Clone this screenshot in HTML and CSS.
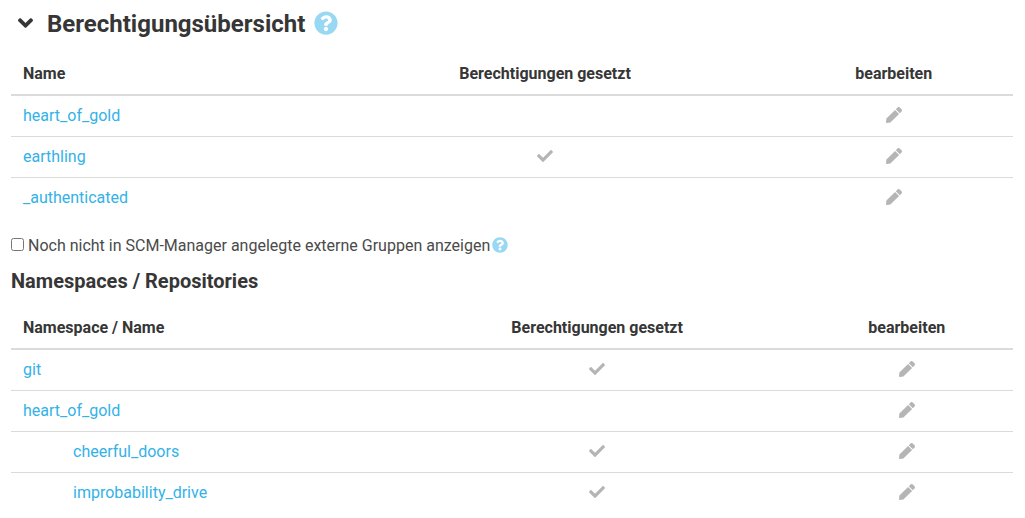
FILE: index.html
```html
<!DOCTYPE html>
<html lang="de">
<head>
<meta charset="utf-8">
<title>Berechtigungsübersicht</title>
<link rel="stylesheet" href="styles.css">
</head>
<body>
<svg class="sprite" aria-hidden="true">
  <symbol id="check" viewBox="0 0 512 512"><path d="M173.898 439.404l-166.4-166.4c-9.997-9.997-9.997-26.206 0-36.204l36.203-36.204c9.997-9.998 26.207-9.998 36.204 0L192 312.69 432.095 72.596c9.997-9.997 26.207-9.997 36.204 0l36.203 36.204c9.997 9.997 9.997 26.206 0 36.204l-294.4 294.401c-9.998 9.997-26.207 9.997-36.204-.001z"/></symbol>
  <symbol id="pen" viewBox="0 0 512 512"><path d="M290.74 93.24l128.02 128.02-277.99 277.99-114.14 12.6C11.35 513.54-1.56 500.62.14 485.34l12.7-114.22 277.9-277.88zm207.2-19.06l-60.11-60.11c-18.75-18.75-49.16-18.75-67.91 0l-56.55 56.55 128.02 128.02 56.55-56.55c18.75-18.76 18.75-49.16 0-67.91z"/></symbol>
  <symbol id="help" viewBox="0 0 512 512"><path d="M504 256c0 136.997-111.043 248-248 248S8 392.997 8 256C8 119.083 119.043 8 256 8s248 111.083 248 248zM262.655 90c-54.497 0-89.255 22.957-116.549 63.758-3.536 5.286-2.353 12.415 2.715 16.258l34.699 26.31c5.205 3.947 12.621 3.008 16.665-2.122 17.864-22.658 30.113-35.797 57.303-35.797 20.429 0 45.698 13.148 45.698 32.958 0 14.976-12.363 22.667-32.534 33.976C247.128 238.528 216 254.941 216 296v4c0 6.627 5.373 12 12 12h56c6.627 0 12-5.373 12-12v-1.333c0-28.462 83.186-29.647 83.186-106.667 0-58.002-60.165-102-116.531-102zM256 338c-25.365 0-46 20.635-46 46 0 25.364 20.635 46 46 46s46-20.636 46-46c0-25.364-20.635-46-46-46z"/></symbol>
  <symbol id="angle-down" viewBox="0 0 320 512"><path d="M143 352.3L7 216.3c-9.4-9.4-9.4-24.6 0-33.9l22.6-22.6c9.4-9.4 24.6-9.4 33.9 0l96.4 96.4 96.4-96.4c9.4-9.4 24.6-9.4 33.9 0l22.6 22.6c9.4 9.4 9.4 24.6 0 33.9l-136 136c-9.2 9.4-24.4 9.4-33.8 0z"/></symbol>
</svg>
<main class="overview">
  <header class="overview-header">
    <button class="icon-button toggle" type="button" aria-label="Einklappen" aria-expanded="true"><svg class="icon-angle"><use href="#angle-down"/></svg></button>
    <h2 class="title">Berechtigungsübersicht</h2>
    <button class="icon-button help" type="button" aria-label="Hilfe"><svg class="icon-large"><use href="#help"/></svg></button>
  </header>

  <table class="table groups">
    <thead>
      <tr><th class="col-name" scope="col">Name</th><th class="col-set" scope="col">Berechtigungen gesetzt</th><th class="col-edit" scope="col">bearbeiten</th></tr>
    </thead>
    <tbody>
      <tr><td><a href="#">heart_of_gold</a></td><td></td><td><a class="edit" href="#" aria-label="heart_of_gold bearbeiten"><svg class="icon"><use href="#pen"/></svg></a></td></tr>
      <tr><td><a href="#">earthling</a></td><td><svg class="icon"><use href="#check"/></svg></td><td><a class="edit" href="#" aria-label="earthling bearbeiten"><svg class="icon"><use href="#pen"/></svg></a></td></tr>
      <tr><td><a href="#">_authenticated</a></td><td></td><td><a class="edit" href="#" aria-label="_authenticated bearbeiten"><svg class="icon"><use href="#pen"/></svg></a></td></tr>
    </tbody>
  </table>

  <div class="option">
    <input class="checkbox" type="checkbox" id="external-groups">
    <label class="option-label" for="external-groups">Noch nicht in SCM-Manager angelegte externe Gruppen anzeigen</label>
    <button class="icon-button help" type="button" aria-label="Hilfe"><svg class="icon"><use href="#help"/></svg></button>
  </div>

  <h3 class="subtitle">Namespaces / Repositories</h3>

  <table class="table repositories">
    <thead>
      <tr><th class="col-name" scope="col">Namespace / Name</th><th class="col-set" scope="col">Berechtigungen gesetzt</th><th class="col-edit" scope="col">bearbeiten</th></tr>
    </thead>
    <tbody>
      <tr><td><a href="#">git</a></td><td><svg class="icon"><use href="#check"/></svg></td><td><a class="edit" href="#" aria-label="git bearbeiten"><svg class="icon"><use href="#pen"/></svg></a></td></tr>
      <tr><td><a href="#">heart_of_gold</a></td><td></td><td><a class="edit" href="#" aria-label="heart_of_gold bearbeiten"><svg class="icon"><use href="#pen"/></svg></a></td></tr>
      <tr><td class="nested"><a href="#">cheerful_doors</a></td><td><svg class="icon"><use href="#check"/></svg></td><td><a class="edit" href="#" aria-label="cheerful_doors bearbeiten"><svg class="icon"><use href="#pen"/></svg></a></td></tr>
      <tr><td class="nested"><a href="#">improbability_drive</a></td><td><svg class="icon"><use href="#check"/></svg></td><td><a class="edit" href="#" aria-label="improbability_drive bearbeiten"><svg class="icon"><use href="#pen"/></svg></a></td></tr>
    </tbody>
  </table>
</main>
</body>
</html>
```
FILE: styles.css
```css
* {
  box-sizing: border-box;
}

body {
  margin: 0;
  background: #fff;
  color: #4a4a4a;
  font: 16px/24px Roboto, "Liberation Sans", sans-serif;
}

.sprite {
  display: none;
}

.overview {
  padding: 6px 12px 4px 11px;
}

.overview-header {
  display: flex;
  align-items: center;
  padding-left: 7px;
  margin-bottom: 12px;
}

.title {
  margin: 0 9px 0 14px;
  color: #363636;
  font-size: 24px;
  line-height: 36px;
  font-weight: 700;
}

.icon-button {
  display: flex;
  margin: 0 0 2px;
  padding: 0;
  border: 0;
  background: none;
  cursor: pointer;
}

.toggle {
  color: #363636;
}

.help {
  color: #99d8f3;
}

.icon,
.icon-large,
.icon-angle {
  display: block;
  width: 16px;
  height: 16px;
  fill: currentColor;
}

.icon-large {
  width: 24px;
  height: 24px;
}

.icon-angle {
  width: 15px;
  height: 24px;
}

.table {
  width: 100%;
  table-layout: fixed;
  border-collapse: collapse;
  color: #363636;
}

.table th,
.table td {
  height: 41px;
  padding: 8px 12px;
  border-bottom: 1px solid #dbdbdb;
  text-align: center;
}

.table th {
  border-bottom-width: 2px;
  font-weight: 700;
}

.table th:first-child,
.table td:first-child {
  text-align: left;
}

.table tbody tr:last-child td {
  border-bottom: 0;
}

.table td.nested {
  padding-left: 62px;
}

.table td .icon {
  margin: 0 auto 2px;
  color: #b5b5b5;
}

.table a {
  color: #33b2e8;
  text-decoration: none;
}

.groups .col-name {
  width: 30.4%;
}

.groups .col-set {
  width: 45.8%;
}

.repositories .col-name {
  width: 38.2%;
}

.repositories .col-set {
  width: 40.6%;
}

.edit {
  display: block;
}

.option {
  display: flex;
  align-items: center;
  margin-top: 15px;
}

.checkbox {
  width: 13px;
  height: 13px;
  margin: 0 0 2px;
}

.option-label {
  margin: 0 2px 0 4px;
}

.subtitle {
  margin: 8px 0 12px;
  color: #363636;
  font-size: 20px;
  line-height: 30px;
  font-weight: 700;
}
```
